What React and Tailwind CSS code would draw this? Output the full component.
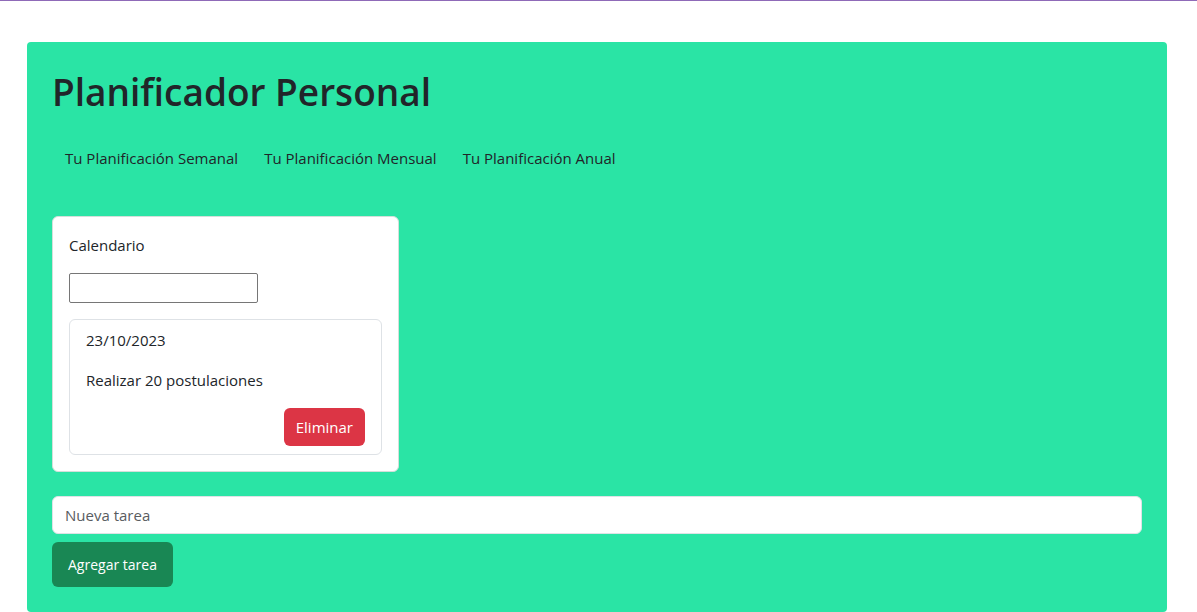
export default function App() {
  return (
    <div className="min-h-screen border-t border-[#8f6ab8] bg-white pt-[41px] pr-[30px] pl-[27px] font-['Segoe_UI','Open_Sans','Noto_Sans',sans-serif] text-[15px] leading-6 text-[#212529]">
      <main className="rounded bg-[#2ae4a5] px-[25px] pt-6 pb-[25px]">
        <h1 className="mb-7 text-[37px] leading-[52px] font-semibold">Planificador Personal</h1>
        <nav className="mb-[46px] flex px-[13px]">
          <ul className="flex flex-wrap gap-x-[26px]">
            <li><a href="#semanal">Tu Planificación Semanal</a></li>
            <li><a href="#mensual">Tu Planificación Mensual</a></li>
            <li><a href="#anual">Tu Planificación Anual</a></li>
          </ul>
        </nav>
        <section className="mb-6 w-[347px] max-w-full rounded-md border border-[#d4dfda] bg-white p-4">
          <label htmlFor="fecha" className="mb-4 block">Calendario</label>
          <input id="fecha" type="text" className="mb-4 block h-[30px] w-[189px] rounded-xs border border-[#767676] px-0.5" />
          <ul>
            <li className="rounded-md border border-[#dee2e6] px-4 py-2">
              <p className="mb-4">23/10/2023</p>
              <p className="mb-4">Realizar 20 postulaciones</p>
              <div className="flex justify-end">
                <button type="button" className="rounded-md bg-[#dc3545] px-3 py-[7px] text-white">Eliminar</button>
              </div>
            </li>
          </ul>
        </section>
        <form onSubmit={(event) => event.preventDefault()}>
          <input type="text" aria-label="Nueva tarea" placeholder="Nueva tarea" className="mb-2 block h-[38px] w-full rounded-md border border-[#dee2e6] bg-white px-3 placeholder:text-[#595c5f]" />
          <button type="submit" className="h-[45px] rounded-md bg-[#198754] px-4 text-sm text-white">Agregar tarea</button>
        </form>
      </main>
    </div>
  );
}
